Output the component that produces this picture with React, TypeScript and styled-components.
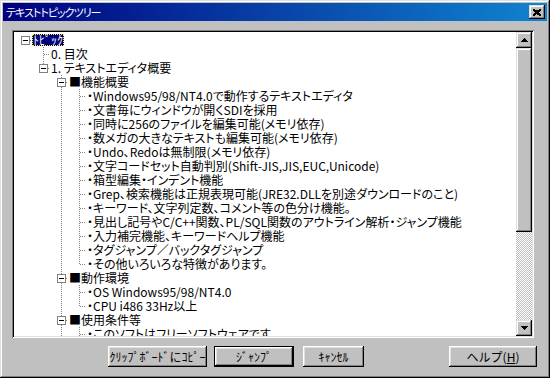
import React from 'react';
import styled, { createGlobalStyle } from 'styled-components';

type TreeNode = {
  text: string;
  selected?: boolean;
  children?: TreeNode[];
};

type Row = {
  key: string;
  text: string;
  depth: number;
  guides: boolean[];
  last: boolean;
  root: boolean;
  hasChildren: boolean;
  selected?: boolean;
};

const leaf = (items: string[]): TreeNode[] => items.map((text) => ({ text: '・' + text }));

const topics: TreeNode[] = [
  {
    text: 'ﾄﾋﾟｯｸ',
    selected: true,
    children: [
      { text: '0. 目次' },
      {
        text: '1. テキストエディタ概要',
        children: [
          {
            text: '■機能概要',
            children: leaf([
              'Windows95/98/NT4.0で動作するテキストエディタ',
              '文書毎にウィンドウが開くSDIを採用',
              '同時に256のファイルを編集可能(メモリ依存)',
              '数メガの大きなテキストも編集可能(メモリ依存)',
              'Undo、Redoは無制限(メモリ依存)',
              '文字コードセット自動判別(Shift-JIS,JIS,EUC,Unicode)',
              '箱型編集・インデント機能',
              'Grep、検索機能は正規表現可能(JRE32.DLLを別途ダウンロードのこと)',
              'キーワード、文字列定数、コメント等の色分け機能。',
              '見出し記号やC/C++関数、PL/SQL関数のアウトライン解析・ジャンプ機能',
              '入力補完機能、キーワードヘルプ機能',
              'タグジャンプ／バックタグジャンプ',
              'その他いろいろな特徴があります。',
            ]),
          },
          {
            text: '■動作環境',
            children: leaf(['OS Windows95/98/NT4.0', 'CPU i486 33Hz以上']),
          },
          {
            text: '■使用条件等',
            children: leaf(['このソフトはフリーソフトウェアです。', '転載は自由です。']),
          },
          {
            text: '■作者連絡先',
            children: leaf(['ご意見・ご要望はメールでどうぞ。']),
          },
        ],
      },
    ],
  },
];

function flatten(nodes: TreeNode[], depth: number, guides: boolean[], prefix: string): Row[] {
  return nodes.flatMap((node, i) => {
    const last = i === nodes.length - 1;
    const key = `${prefix}-${i}`;
    const row: Row = {
      key,
      text: node.text,
      depth,
      guides,
      last,
      root: depth === 0 && i === 0,
      hasChildren: !!node.children?.length,
      selected: node.selected,
    };
    const kids = node.children ? flatten(node.children, depth + 1, [...guides, !last], key) : [];
    return [row, ...kids];
  });
}

const rows = flatten(topics, 0, [], 'n');

const GlobalStyle = createGlobalStyle`
  html, body {
    margin: 0;
    padding: 0;
    background: #c0c0c0;
  }
  body {
    font-family: "Noto Sans CJK JP", "Noto Sans", sans-serif;
    font-size: 12px;
    color: #000;
  }
  * {
    box-sizing: border-box;
  }
`;

const raised = `
  box-shadow: inset -1px -1px #000, inset 1px 1px #dfdfdf, inset -2px -2px #808080, inset 2px 2px #fff;
`;

const Window = styled.div`
  width: 550px;
  height: 378px;
  padding: 3px;
  background: #c0c0c0;
  display: flex;
  flex-direction: column;
  ${raised}
`;

const TitleBar = styled.div`
  height: 18px;
  flex: none;
  display: flex;
  align-items: center;
  padding-left: 3px;
  background: linear-gradient(to right, #000080, #1084d0);
  color: #fff;
`;

const Title = styled.span`
  flex: 1;
  font-size: 11px;
  letter-spacing: -1px;
  font-feature-settings: "palt";
  line-height: 18px;
  white-space: nowrap;
`;

const CloseButton = styled.div`
  width: 16px;
  height: 14px;
  margin-right: 2px;
  background: #c0c0c0;
  display: flex;
  align-items: center;
  justify-content: center;
  ${raised}
`;

const Body = styled.div`
  flex: 1;
  display: flex;
  flex-direction: column;
  padding: 9px 13px 8px 9px;
  gap: 8px;
`;

const TreeView = styled.div`
  height: 308px;
  padding: 2px;
  display: flex;
  background: #fff;
  box-shadow: inset 1px 1px #808080, inset -1px -1px #fff, inset 2px 2px #000, inset -2px -2px #dfdfdf;
`;

const TreeContent = styled.div`
  flex: 1;
  overflow: hidden;
  padding: 1px 0 0 2px;
  font-feature-settings: "palt";
`;

const TreeRow = styled.div`
  height: 14px;
  display: flex;
  align-items: center;
  white-space: nowrap;
`;

const Label = styled.span<{ $selected?: boolean }>`
  height: 12px;
  line-height: 12px;
  padding: 0 1px;
  background: ${(p) => (p.$selected ? '#000080' : 'transparent')};
  color: ${(p) => (p.$selected ? '#fff' : '#000')};
  outline: ${(p) => (p.$selected ? '1px dotted #ffff00' : 'none')};
  outline-offset: -1px;
  font-feature-settings: ${(p) => (p.$selected ? 'normal' : 'inherit')};
`;

const ScrollBar = styled.div`
  width: 16px;
  flex: none;
  display: flex;
  flex-direction: column;
`;

const ScrollButton = styled.div`
  width: 16px;
  height: 16px;
  flex: none;
  background: #c0c0c0;
  display: flex;
  align-items: center;
  justify-content: center;
  ${raised}
`;

const Track = styled.div`
  flex: 1;
  display: flex;
  flex-direction: column;
  background-color: #fff;
  background-image: repeating-conic-gradient(#c0c0c0 0 25%, #fff 0 50%);
  background-size: 2px 2px;
`;

const Thumb = styled.div<{ $size: number }>`
  height: ${(p) => p.$size}px;
  background: #c0c0c0;
  ${raised}
`;

const ButtonRow = styled.div`
  display: flex;
  align-items: center;
  padding-left: 96px;
  margin-right: -3px;
`;

const PushButton = styled.div<{ $width: number; $default?: boolean; $gap?: number }>`
  width: ${(p) => p.$width}px;
  height: 21px;
  margin-right: ${(p) => p.$gap ?? 0}px;
  display: flex;
  align-items: center;
  justify-content: center;
  background: #c0c0c0;
  font-size: 12px;
  line-height: 14px;
  white-space: nowrap;
  border: ${(p) => (p.$default ? '1px solid #000' : 'none')};
  box-shadow: inset -1px -1px #000, inset 1px 1px #fff, inset -2px -2px #808080, inset 2px 2px #dfdfdf;
`;

const Spacer = styled.div`
  flex: 1;
`;

const Line = (props: { x1: number; y1: number; x2: number; y2: number }) => (
  <line {...props} stroke="#808080" strokeWidth={1} strokeDasharray="1 1" shapeRendering="crispEdges" />
);

function Guide({ line }: { line: boolean }) {
  return (
    <svg width={18} height={14} style={{ flex: 'none' }}>
      {line && <Line x1={9.5} y1={0} x2={9.5} y2={14} />}
    </svg>
  );
}

function Connector({ row }: { row: Row }) {
  return (
    <svg width={16} height={14} style={{ flex: 'none' }}>
      {!row.root && <Line x1={9.5} y1={0} x2={9.5} y2={row.last ? 8 : 14} />}
      <Line x1={10} y1={7.5} x2={16} y2={7.5} />
      {row.hasChildren && (
        <>
          <rect x={5.5} y={3.5} width={8} height={8} fill="#fff" stroke="#808080" shapeRendering="crispEdges" />
          <line x1={7} y1={7.5} x2={12} y2={7.5} stroke="#000" shapeRendering="crispEdges" />
        </>
      )}
    </svg>
  );
}

function Arrow({ up }: { up?: boolean }) {
  return (
    <svg width={7} height={4} viewBox="0 0 7 4">
      <path d={up ? 'M3.5 0L7 4H0Z' : 'M0 0H7L3.5 4Z'} fill="#000" shapeRendering="crispEdges" />
    </svg>
  );
}

export default function App() {
  return (
    <>
      <GlobalStyle />
      <Window>
        <TitleBar>
          <Title>テキストトピックツリー</Title>
          <CloseButton>
            <svg width={8} height={7} viewBox="0 0 8 7">
              <path d="M0 0L8 7M1 0L8 6M0 1L7 7M8 0L0 7M7 0L0 6M8 1L1 7" stroke="#000" strokeWidth={1} shapeRendering="crispEdges" />
            </svg>
          </CloseButton>
        </TitleBar>
        <Body>
          <TreeView>
            <TreeContent>
              {rows.map((row) => (
                <TreeRow key={row.key}>
                  {row.guides.map((g, i) => (
                    <Guide key={i} line={g} />
                  ))}
                  <Connector row={row} />
                  <Label $selected={row.selected}>{row.text}</Label>
                </TreeRow>
              ))}
            </TreeContent>
            <ScrollBar>
              <ScrollButton>
                <Arrow up />
              </ScrollButton>
              <Track>
                <Thumb $size={184} />
              </Track>
              <ScrollButton>
                <Arrow />
              </ScrollButton>
            </ScrollBar>
          </TreeView>
          <ButtonRow>
            <PushButton $width={99} $gap={7}>ｸﾘｯﾌﾟﾎﾞｰﾄﾞにｺﾋﾟｰ</PushButton>
            <PushButton $width={80} $gap={9} $default>
              ｼﾞｬﾝﾌﾟ
            </PushButton>
            <PushButton $width={61}>ｷｬﾝｾﾙ</PushButton>
            <Spacer />
            <PushButton $width={88}>
              ヘルプ(<u>H</u>)
            </PushButton>
          </ButtonRow>
        </Body>
      </Window>
    </>
  );
}
